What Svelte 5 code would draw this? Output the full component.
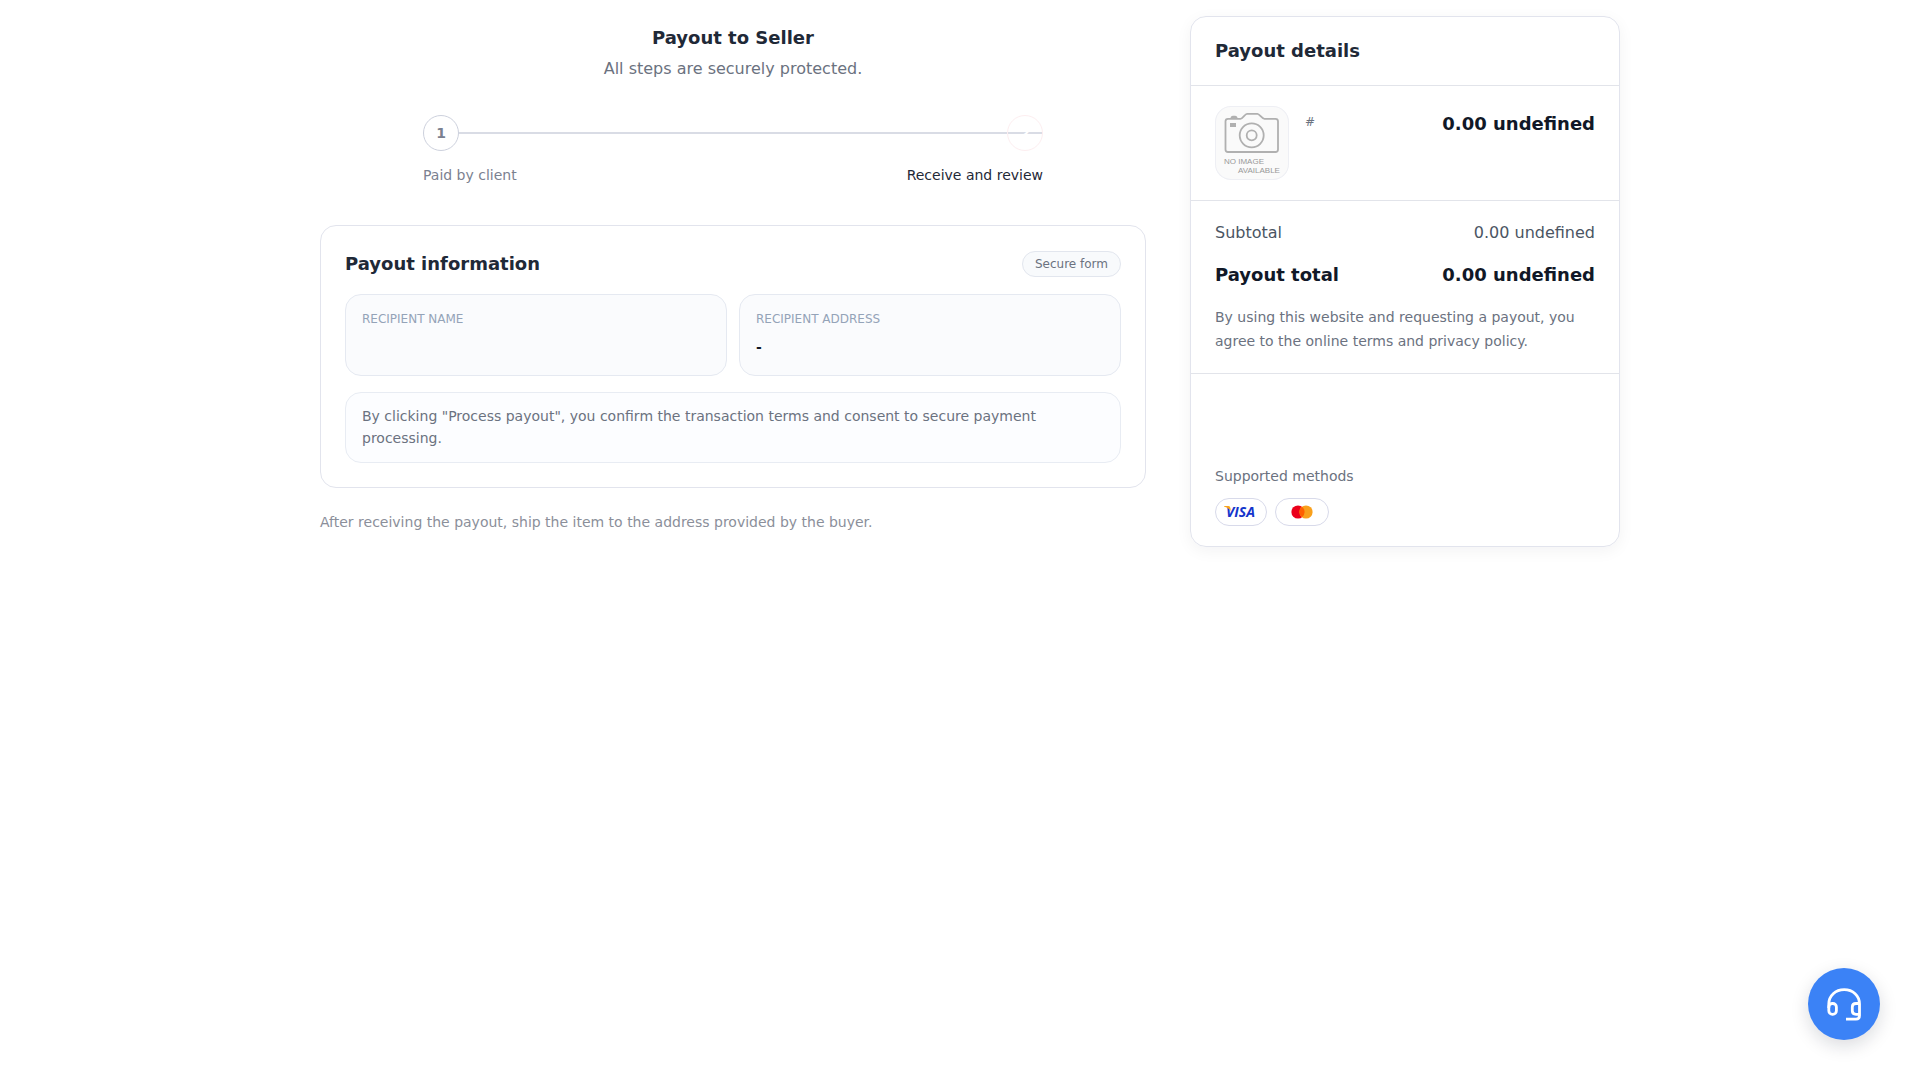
<script>
  export let title = "Payout to Seller";
  export let subtitle = "All steps are securely protected.";
  export let currency = "undefined";
  export let amount = 0;
  export let itemId = "";
  export let recipientName = "";
  export let recipientAddress = "";

  let steps = [
    { id: 1, label: "Paid by client", active: false },
    { id: 2, label: "Receive and review", active: true }
  ];

  $: price = `${amount.toFixed(2)} ${currency}`;
  $: fields = [
    { label: "Recipient name", value: recipientName },
    { label: "Recipient address", value: recipientAddress || "-" }
  ];

  function openSupport() {
    console.log("Support chat opened");
  }
</script>

<div class="page">
  <main class="main">
    <header class="page-header">
      <h1>{title}</h1>
      <p>{subtitle}</p>
    </header>

    <ol class="steps">
      {#each steps as step}
        <li class="step" class:active={step.active}>
          <span class="step-circle">{step.id}</span>
          <span class="step-label">{step.label}</span>
        </li>
      {/each}
    </ol>

    <section class="card">
      <div class="card-head">
        <h2>Payout information</h2>
        <span class="badge">Secure form</span>
      </div>

      <dl class="fields">
        {#each fields as field}
          <div class="field">
            <dt>{field.label}</dt>
            <dd>{field.value}</dd>
          </div>
        {/each}
      </dl>

      <p class="notice">
        By clicking "Process payout", you confirm the transaction terms and consent to secure payment processing.
      </p>
    </section>

    <p class="after-note">After receiving the payout, ship the item to the address provided by the buyer.</p>
  </main>

  <aside class="summary">
    <div class="summary-section">
      <h2>Payout details</h2>
    </div>

    <div class="summary-section item">
      <div class="thumb">
        <svg viewBox="0 0 74 74" role="img" aria-label="No image available">
          <g fill="none" stroke="#b0b0b0" stroke-width="1.8" stroke-linejoin="round">
            <path d="M13 12.8H25.5C27.5 12.8 30 7.8 32 7.8H42.5C44.500 7.800 47 12.800 49.500 12.800H60.500Q63 12.800 63 15.300V43.500Q63 46 60.500 46H13Q10.500 46 10.500 43.500V15.300Q10.500 12.800 13 12.800Z" />
            <circle cx="36.700" cy="29.300" r="12" />
            <circle cx="36.700" cy="29.300" r="5" />
          </g>
          <path d="M15.500 12.500Q15.500 9.700 18 9.700H20Q22.500 9.700 22.500 12.500Z" fill="#b0b0b0" />
          <rect x="15" y="17" width="6" height="4" fill="#b0b0b0" />
          <text x="9" y="58">NO IMAGE</text>
          <text x="23" y="67">AVAILABLE</text>
        </svg>
      </div>
      <span class="item-id">#{itemId}</span>
      <strong class="item-price">{price}</strong>
    </div>

    <div class="summary-section totals">
      <div class="row">
        <span>Subtotal</span>
        <span>{price}</span>
      </div>
      <div class="row total">
        <span>Payout total</span>
        <span>{price}</span>
      </div>
      <p class="terms">By using this website and requesting a payout, you agree to the online terms and privacy policy.</p>
    </div>

    <div class="summary-section methods">
      <p>Supported methods</p>
      <div class="method-list">
        <span class="method">
          <svg width="34" height="18" viewBox="0 0 34 18" role="img" aria-label="Visa">
            <text class="visa" x="2" y="14">VISA</text>
            <path d="M0 3H4.500Q6.200 3 6.400 5L6.800 8Q4 4.200 0 3.400Z" fill="#f9a51a" />
          </svg>
        </span>
        <span class="method">
          <svg width="36" height="18" viewBox="0 0 36 18" role="img" aria-label="Mastercard">
            <circle cx="14" cy="9" r="6.600" fill="#eb001b" />
            <circle cx="22" cy="9" r="6.600" fill="#f9a01b" />
            <path d="M18 3.750A6.600 6.600 0 0 1 18 14.250A6.600 6.600 0 0 1 18 3.750Z" fill="#ff5f00" />
          </svg>
        </span>
      </div>
    </div>
  </aside>
</div>

<button class="support" aria-label="Contact support" on:click={openSupport}>
  <svg width="44" height="44" viewBox="0 0 44 44" fill="none" stroke="#fff" stroke-width="2.800" stroke-linejoin="round">
    <path d="M6.800 26V22C6.800 13.500 13.500 7.700 22.200 7.700S37.500 13.500 37.500 22V33.500Q37.500 37.200 34 37.200H24" />
    <rect x="6.800" y="21.500" width="7.600" height="10.800" rx="3.600" />
    <path d="M37.500 21.500H34Q30.300 21.500 30.300 25V28.800Q30.300 32.300 34 32.300H37.500" />
  </svg>
</button>

<style>
  :global(body) {
    margin: 0;
    background: #fff;
    color: #1f2937;
    font-family: 'DejaVu Sans', sans-serif;
  }

  h1,
  h2,
  p,
  dl,
  dd,
  ol {
    margin: 0;
    padding: 0;
  }

  h1,
  h2 {
    font-size: 18px;
    line-height: 28px;
    font-weight: 700;
    color: #1f2937;
  }

  .page {
    display: grid;
    grid-template-columns: minmax(0, 1fr) 430px;
    gap: 24px;
    align-items: start;
    max-width: 1320px;
    margin: 0 auto;
    padding: 16px 0;
  }

  .main {
    padding: 8px 20px;
  }

  .page-header {
    text-align: center;
    margin-bottom: 34px;
  }

  .page-header p {
    margin-top: 5px;
    font-size: 16px;
    line-height: 24px;
    color: #6b7280;
  }

  .steps {
    display: flex;
    justify-content: space-between;
    max-width: 620px;
    margin: 0 auto 40px;
    list-style: none;
    /* connecting line behind the circles */
    background: linear-gradient(#d9dce5, #d9dce5) 0 17px / 100% 2px no-repeat;
  }

  .step {
    display: flex;
    flex-direction: column;
    align-items: flex-start;
    gap: 14px;
    color: #7b8190;
  }

  .step-circle {
    display: flex;
    align-items: center;
    justify-content: center;
    box-sizing: border-box;
    width: 36px;
    height: 36px;
    border: 1px solid #cdd1dd;
    border-radius: 50%;
    background: #fff;
    font-size: 14px;
    font-weight: 700;
  }

  .step-label {
    font-size: 14px;
    line-height: 20px;
  }

  .step.active {
    align-items: flex-end;
    color: #1f2937;
  }

  .step.active .step-circle {
    border-color: #fdeef0;
    background: transparent;
    color: #fff;
  }

  .card {
    padding: 24px;
    border: 1px solid #e2e4ed;
    border-radius: 16px;
  }

  .card-head {
    display: flex;
    align-items: center;
    justify-content: space-between;
    margin-bottom: 16px;
  }

  .badge {
    padding: 4px 12px;
    border: 1px solid #e2e6ee;
    border-radius: 999px;
    background: #f8fafc;
    font-size: 12px;
    line-height: 16px;
    color: #6b7280;
  }

  .fields {
    display: grid;
    grid-template-columns: 1fr 1fr;
    gap: 12px;
    margin-bottom: 16px;
  }

  .field {
    padding: 16px;
    border: 1px solid #e5e9f1;
    border-radius: 16px;
    background: #fafbfd;
  }

  .field dt {
    font-size: 12px;
    line-height: 16px;
    text-transform: uppercase;
    color: #94a3b8;
  }

  .field dd {
    min-height: 24px;
    margin-top: 8px;
    font-size: 14px;
    line-height: 24px;
    font-weight: 700;
    color: #111827;
  }

  .notice {
    padding: 12px 16px 13px;
    border: 1px solid #e8ecf3;
    border-radius: 16px;
    background: #fcfdff;
    font-size: 14px;
    line-height: 22px;
    color: #6b7280;
  }

  .after-note {
    margin-top: 24px;
    font-size: 14px;
    line-height: 20px;
    color: #8b8f9a;
  }

  .summary {
    border: 1px solid #e2e4ed;
    border-radius: 16px;
    box-shadow: 0 4px 16px rgba(15, 23, 42, 0.05);
  }

  .summary-section {
    padding: 20px 24px;
  }

  .summary-section + .summary-section {
    border-top: 1px solid #e2e4ea;
  }

  .item {
    display: flex;
    align-items: flex-start;
    gap: 16px;
  }

  .thumb {
    display: flex;
    box-sizing: border-box;
    width: 74px;
    height: 74px;
    border-radius: 16px;
    background: #fafafa;
    box-shadow: inset 0 0 0 1px #eeeff4;
  }

  .thumb text {
    font-family: 'Liberation Sans', sans-serif;
    font-size: 8px;
    fill: #999;
  }

  .item-id {
    flex: 1;
    padding-top: 8px;
    font-size: 12px;
    line-height: 16px;
    color: #6b7280;
  }

  .item-price {
    padding-top: 4px;
    font-size: 18px;
    line-height: 28px;
    color: #111827;
  }

  .totals {
    display: flex;
    flex-direction: column;
    gap: 16px;
  }

  .row {
    display: flex;
    justify-content: space-between;
    font-size: 16px;
    line-height: 24px;
    color: #4b5563;
  }

  .row.total {
    font-size: 18px;
    line-height: 28px;
    font-weight: 700;
    color: #111827;
  }

  .terms {
    font-size: 14px;
    line-height: 24px;
    color: #6b7280;
  }

  .summary-section.methods {
    padding-top: 92px;
  }

  .methods p {
    margin-bottom: 12px;
    font-size: 14px;
    line-height: 20px;
    color: #6b7280;
  }

  .method-list {
    display: flex;
    gap: 8px;
  }

  .method {
    display: flex;
    padding: 4px 8px;
    border: 1px solid #d8daea;
    border-radius: 999px;
  }

  .visa {
    font-family: 'Open Sans', sans-serif;
    font-size: 14px;
    font-weight: 700;
    font-style: italic;
    fill: #1434cb;
  }

  .support {
    position: fixed;
    right: 40px;
    bottom: 40px;
    display: flex;
    align-items: center;
    justify-content: center;
    width: 72px;
    height: 72px;
    padding: 0;
    border: none;
    border-radius: 50%;
    background: #3b82f6;
    box-shadow: 0 6px 18px rgba(15, 23, 42, 0.15);
    cursor: pointer;
  }

  @media (max-width: 900px) {
    .page {
      grid-template-columns: minmax(0, 1fr);
    }

    .fields {
      grid-template-columns: 1fr;
    }
  }
</style>
